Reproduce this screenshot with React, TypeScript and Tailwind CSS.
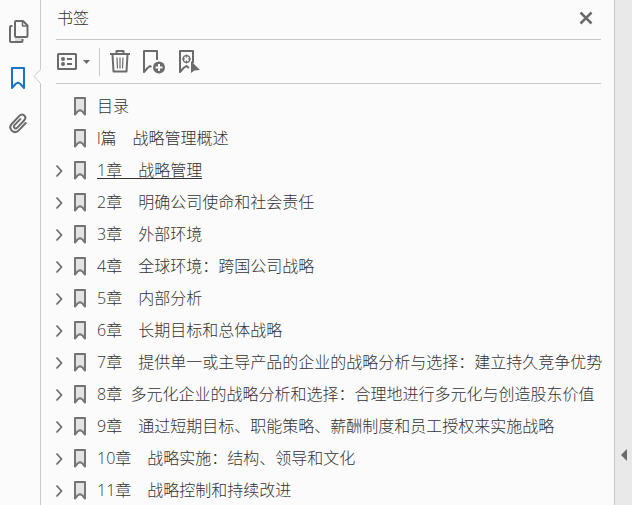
const chapters = [
  { title: '目录', expandable: false },
  { title: 'l篇　战略管理概述', expandable: false },
  { title: '1章　战略管理', expandable: true, current: true },
  { title: '2章　明确公司使命和社会责任', expandable: true },
  { title: '3章　外部环境', expandable: true },
  { title: '4章　全球环境：跨国公司战略', expandable: true },
  { title: '5章　内部分析', expandable: true },
  { title: '6章　长期目标和总体战略', expandable: true },
  { title: '7章　提供单一或主导产品的企业的战略分析与选择：建立持久竞争优势', expandable: true },
  { title: '8章  多元化企业的战略分析和选择：合理地进行多元化与创造股东价值', expandable: true },
  { title: '9章　通过短期目标、职能策略、薪酬制度和员工授权来实施战略', expandable: true },
  { title: '10章　战略实施：结构、领导和文化', expandable: true },
  { title: '11章　战略控制和持续改进', expandable: true },
];

function PagesIcon() {
  return (
    <svg width="20" height="24" viewBox="0 0 20 24" fill="none" stroke="#6b6b6b" strokeWidth="2" strokeLinejoin="round">
      <path d="M6 18h7v3H6z" fill="#dcdcdc" stroke="none" />
      <path d="M3.5 6H2a1 1 0 0 0-1 1v14a1 1 0 0 0 1 1h10.5a1 1 0 0 0 1-1v-2" />
      <path d="M7 1h7l4.500 4.500V16a1 1 0 0 1-1 1H7a1 1 0 0 1-1-1V2a1 1 0 0 1 1-1z" />
      <path d="M13.500 1v5h5" strokeWidth="1.500" />
    </svg>
  );
}

function BookmarkTabIcon() {
  return (
    <svg width="16" height="24" viewBox="0 0 16 24" fill="none" stroke="#1b73c9" strokeWidth="2" strokeLinejoin="round">
      <path d="M2 2h12v20l-3.500-4-2.500-1.500-2.500 1.500-3.500 4z" />
    </svg>
  );
}

function ClipIcon() {
  return (
    <svg width="20" height="22" viewBox="0 0 22 24" fill="none" stroke="#6b6b6b" strokeWidth="2.200" strokeLinecap="round" strokeLinejoin="round">
      <path d="M19.500 12l-7.200 7.600c-2.400 2.600-5.600 3-8 .9-2.300-2.200-2.200-5.300 0-7.700l8.200-8.600c1.600-1.700 3.800-1.900 5.400-.4 1.600 1.500 1.500 3.600 0 5.200l-7.700 8.100c-.9 1-2.200 1.100-3.100.3-.9-.9-.8-2 .1-3l6.300-6.600" />
    </svg>
  );
}

function OptionsIcon() {
  return (
    <svg width="34" height="18" viewBox="0 0 34 18" fill="none">
      <rect x="1" y="1" width="18" height="15" rx="0.5" stroke="#6b6b6b" strokeWidth="2" />
      <circle cx="6" cy="6" r="2" fill="#6b6b6b" />
      <circle cx="6" cy="11" r="2" fill="#6b6b6b" />
      <path d="M10 6h5M10 11h5" stroke="#6b6b6b" strokeWidth="2" />
      <path d="M26 7h7l-3.500 4z" fill="#6b6b6b" />
    </svg>
  );
}

function TrashIcon() {
  return (
    <svg width="20" height="24" viewBox="0 0 20 24" fill="none" stroke="#6b6b6b">
      <path d="M0 4h20" strokeWidth="2" />
      <path d="M6.500 4V1h7v3" strokeWidth="2" strokeLinejoin="round" />
      <path d="M2.500 4.500L3.500 21.500h13l1-17" strokeWidth="2" strokeLinejoin="round" />
      <path d="M7 7.500l.5 11M10 7.500v11M13 7.500l-.5 11" strokeWidth="1.200" />
    </svg>
  );
}

function AddBookmarkIcon() {
  return (
    <svg width="24" height="24" viewBox="0 0 24 24" fill="none">
      <path d="M9.500 17l-1.500-1-2.500 2-3.500 4V1h13v9" stroke="#6b6b6b" strokeWidth="2" strokeLinejoin="round" />
      <circle cx="17" cy="17.500" r="6" fill="#6b6b6b" />
      <path d="M13.500 17.500h7M17 14v7" stroke="#fbfbfb" strokeWidth="2" />
    </svg>
  );
}

function FindBookmarkIcon() {
  return (
    <svg width="22" height="24" viewBox="0 0 22 24" fill="none">
      <path d="M11 18l-2.500-2-3 2-3.500 4V1h13v12" stroke="#6b6b6b" strokeWidth="2" strokeLinejoin="round" />
      <circle cx="8.500" cy="9" r="3.300" stroke="#6b6b6b" strokeWidth="1.300" />
      <path d="M8.500 4.500v3M8.500 10.500v3M4 9h3M10 9h3" stroke="#6b6b6b" strokeWidth="1.200" />
      <path d="M13 11v12l3.300-2.500 5.700-.5z" fill="#6b6b6b" />
    </svg>
  );
}

function RowBookmarkIcon() {
  return (
    <svg className="shrink-0" width="12" height="20" viewBox="0 0 12 20" fill="#e3e3e3" stroke="#757575" strokeWidth="2" strokeLinejoin="round">
      <path d="M1 2h10v16.500l-2.500-3L6 14l-2.500 1.500-2.500 3z" />
    </svg>
  );
}

function Chevron() {
  return (
    <svg width="8" height="14" viewBox="0 0 8 14" fill="none" stroke="#6b6b6b" strokeWidth="1.700">
      <path d="M1.500 2.500L6.500 8l-5 5.500" />
    </svg>
  );
}

export default function App() {
  return (
    <div className="flex h-screen overflow-hidden bg-[#fbfbfb] font-['Open_Sans','Noto_Sans_CJK_SC',sans-serif] text-base font-light text-[#333333]">
      <nav className="relative flex w-10 shrink-0 flex-col items-center gap-[22px] pt-5 pr-1" aria-label="导航窗格">
        <button type="button" className="ml-0.5" aria-label="页面缩略图"><PagesIcon /></button>
        <button type="button" aria-label="书签" aria-pressed="true"><BookmarkTabIcon /></button>
        <button type="button" aria-label="附件"><ClipIcon /></button>
        {/* notch pointing at the active tab */}
        <svg className="absolute top-[69px] -right-px z-10" width="8" height="15" viewBox="0 0 8 15" fill="#fbfbfb">
          <path d="M8 0L1 7.500l7 7.500z" />
          <path d="M7.500 .5L1 7.500l6.500 7" fill="none" stroke="#c8c8c8" />
        </svg>
      </nav>

      <section className="flex min-w-0 flex-1 flex-col border-x border-[#c8c8c8]">
        <header className="mr-[13px] ml-[15px] flex h-10 shrink-0 items-center justify-between border-b border-[#c8c8c8] pr-2 pb-1 pl-px">
          <h2>书签</h2>
          <button type="button" aria-label="关闭">
            <svg width="14" height="14" viewBox="0 0 14 14" stroke="#6b6b6b" strokeWidth="2.500">
              <path d="M1.500 1.500l11 11M12.500 1.500l-11 11" />
            </svg>
          </button>
        </header>

        <div className="mr-[13px] ml-[15px] flex h-11 shrink-0 items-center border-b border-[#c8c8c8] pl-px">
          <button type="button" aria-label="选项"><OptionsIcon /></button>
          <div className="mr-2.5 ml-2 h-7 w-px bg-[#c8c8c8]" />
          <button type="button" aria-label="删除书签"><TrashIcon /></button>
          <button type="button" className="ml-3" aria-label="新建书签"><AddBookmarkIcon /></button>
          <button type="button" className="ml-3" aria-label="查找当前书签"><FindBookmarkIcon /></button>
        </div>

        <ul className="min-h-0 flex-1 overflow-hidden pt-1.5 pl-3.5">
          {chapters.map((chapter) => (
            <li key={chapter.title} className="flex h-8 items-center">
              <div className="flex w-[19px] shrink-0">
                {chapter.expandable && (
                  <button type="button" aria-label="展开"><Chevron /></button>
                )}
              </div>
              <RowBookmarkIcon />
              <a
                href="#"
                className={`ml-[11px] whitespace-pre leading-6 ${chapter.current ? 'underline underline-offset-2' : ''}`}
              >
                {chapter.title}
              </a>
            </li>
          ))}
        </ul>
      </section>

      <aside className="flex w-[17px] shrink-0 flex-col items-center justify-end bg-[#e9e9e9] pb-11">
        <button type="button" aria-label="展开工具窗格">
          <svg width="6" height="12" viewBox="0 0 6 12" fill="#6b6b6b">
            <path d="M6 0v12L0 6z" />
          </svg>
        </button>
      </aside>
    </div>
  );
}
